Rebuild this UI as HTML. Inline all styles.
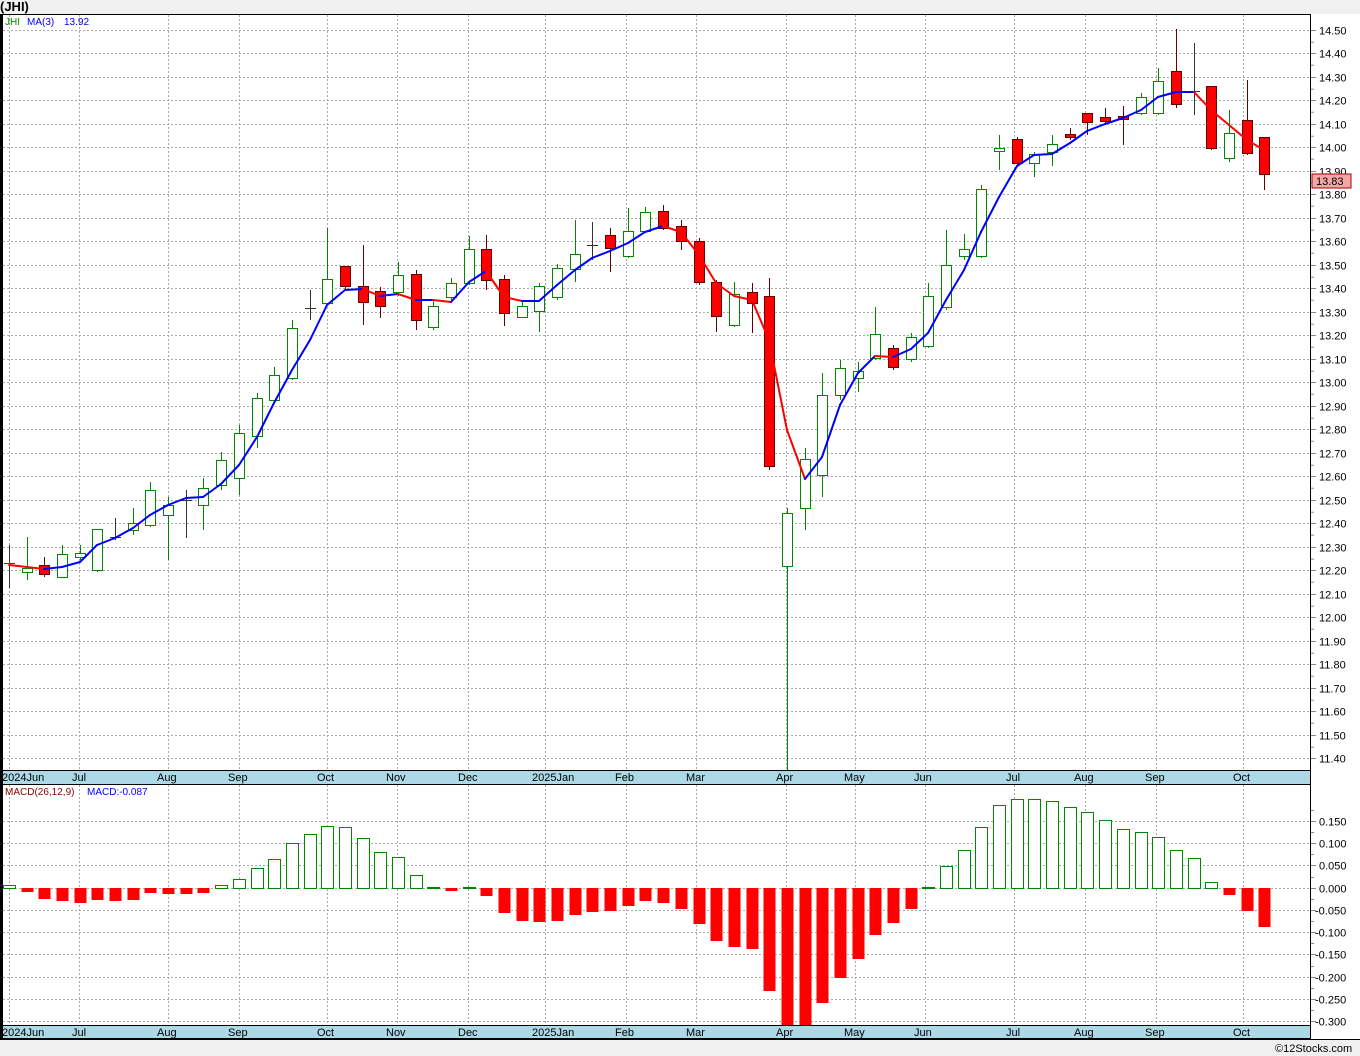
<!DOCTYPE html>
<html><head><meta charset="utf-8"><style>
body{margin:0;width:1360px;height:1056px;background:#f0f0f0;overflow:hidden;font-family:"Liberation Sans",sans-serif}
svg{position:absolute;left:0;top:0}
</style></head><body>
<svg id="s" width="1360" height="1056" xmlns="http://www.w3.org/2000/svg" font-family="Liberation Sans, sans-serif">
<rect x="2" y="14" width="1309" height="770" fill="#fff"/>
<rect x="1311" y="14" width="49" height="1025" fill="#fff"/>
<rect x="2" y="785" width="1309" height="254" fill="#fff"/>
<rect x="2" y="770" width="1309" height="14" fill="#add8e6"/>
<rect x="2" y="1025" width="1309" height="14" fill="#add8e6"/>
<g id="grid" stroke="#aaa" stroke-dasharray="2,2" stroke-width="1"></g>
<g id="bars"></g>
<g id="cand"></g>
<g id="ma" fill="none" stroke-width="2"></g>
<rect x="2.5" y="14.5" width="1308" height="1024" fill="none" stroke="#000"/>
<line x1="2" y1="784.5" x2="1311" y2="784.5" stroke="#000"/>
<line x1="2" y1="770.5" x2="1311" y2="770.5" stroke="#000"/>
<line x1="2" y1="1025.5" x2="1311" y2="1025.5" stroke="#000"/>
<line x1="2" y1="1039.5" x2="1360" y2="1039.5" stroke="#000"/>
<rect x="0" y="14" width="2" height="1026" fill="#000"/>
<g id="ticks" stroke="#888"></g>
<g font-size="11" fill="#000" id="lbl">
<text x="0" y="11" font-size="13" font-weight="bold">(JHI)</text>
<text x="5" y="25" font-size="10" fill="#080">JHI</text>
<text x="27" y="25" font-size="10" fill="#00f">MA(3)</text>
<text x="64" y="25" font-size="10" fill="#00f">13.92</text>
<text x="5" y="795" font-size="10" fill="#800">MACD(26,12,9)</text>
<text x="87" y="795" font-size="10" fill="#00f">MACD:-0.087</text>
<text x="1275" y="1052" font-size="11">©12Stocks.com</text>
</g>
<rect x="1312" y="174" width="39" height="14" fill="#f4a6a6" stroke="#a00"/>
<text x="1316" y="185" font-size="11">13.83</text>
</svg>
<script>
var NS="http://www.w3.org/2000/svg";
function el(p,t,a){var e=document.createElementNS(NS,t);for(var k in a)e.setAttribute(k,a[k]);p.appendChild(e);return e;}
var g=document.getElementById('grid'),tk=document.getElementById('ticks'),lb=document.getElementById('lbl');
var months=[[9,"2024Jun",2],[79,"Jul",72],[168,"Aug",157],[239,"Sep",228],[327,"Oct",317],[397,"Nov",386],[468,"Dec",458],[545,"2025Jan",532],[626,"Feb",615],[696,"Mar",686],[786,"Apr",776],[855,"May",844],[925,"Jun",914],[1014,"Jul",1006],[1085,"Aug",1074],[1156,"Sep",1145],[1243,"Oct",1233]];
months.forEach(function(m){el(g,'line',{x1:m[0]+.5,y1:15,x2:m[0]+.5,y2:770});el(g,'line',{x1:m[0]+.5,y1:785,x2:m[0]+.5,y2:1025});
var t=el(lb,'text',{x:m[2],y:781});t.textContent=m[1];var t2=el(lb,'text',{x:m[2],y:1036});t2.textContent=m[1];});
for(var k=0;k<=31;k++){var y=Math.round(30+k*23.484)+.5;el(g,'line',{x1:3,y1:y,x2:1311,y2:y});el(tk,'line',{x1:1311,y1:y,x2:1316,y2:y});
var t=el(lb,'text',{x:1319,y:y+4});t.textContent=(14.5-k*0.1).toFixed(2);
if(k<31)el(tk,'line',{x1:1311,y1:y+11.7,x2:1314,y2:y+11.7});}
for(var k=0;k<=9;k++){var v=0.15-k*0.05;var y=Math.round(821+k*22.22)+.5;el(g,'line',{x1:3,y1:y,x2:1311,y2:y});el(tk,'line',{x1:1311,y1:y,x2:1316,y2:y});
var s=v.toFixed(3);if(Math.abs(v)<1e-9)s="0.000";var t=el(lb,'text',{x:v<-1e-9?1315:1319,y:y+4});t.textContent=s;
el(tk,'line',{x1:1311,y1:y-11,x2:1314,y2:y-11});}
var C=[[545,588,563,565,'d'],[537,580,568,572,'g'],[557,577,565,574,'r'],[545,578,554,577,'g'],[545,560,553,557,'g'],[529,572,529,570,'g'],[518,540,537,538,'d'],[508,535,523,530,'g'],[482,527,490,525,'g'],[497,560,505,515,'g'],[490,538,500,501,'d'],[478,530,488,505,'g'],[452,490,460,485,'g'],[425,495,433,478,'g'],[393,448,398,436,'g'],[367,402,375,400,'g'],[320,380,328,378,'g'],[290,320,308,309,'d'],[228,305,279,303,'g'],[266,290,266,286,'r'],[245,325,286,302,'r'],[287,318,291,306,'r'],[262,296,275,292,'g'],[270,330,274,320,'r'],[300,330,306,327,'g'],[278,300,283,297,'g'],[236,285,249,283,'g'],[235,290,249,280,'r'],[275,326,279,313,'r'],[300,318,306,317,'g'],[283,332,286,311,'g'],[264,300,268,297,'g'],[220,282,254,269,'g'],[222,260,245,246,'d'],[228,272,235,248,'r'],[208,258,231,256,'g'],[207,233,212,231,'g'],[205,230,211,228,'r'],[220,250,226,241,'r'],[238,285,241,282,'r'],[280,332,282,316,'r'],[282,327,294,325,'g'],[283,333,292,303,'r'],[278,470,296,466,'r'],[508,770,513,566,'g'],[448,530,459,508,'g'],[373,497,395,475,'g'],[360,400,368,395,'g'],[362,392,371,378,'g'],[307,360,334,358,'g'],[345,370,348,367,'r'],[333,362,337,359,'g'],[283,348,296,346,'g'],[230,310,265,307,'g'],[234,260,249,256,'g'],[185,258,189,256,'g'],[135,170,148,151,'g'],[137,165,139,163,'r'],[152,177,154,163,'g'],[135,166,144,152,'g'],[128,140,134,137,'r'],[113,135,113,122,'r'],[108,125,117,121,'r'],[106,145,116,119,'r'],[93,115,97,113,'g'],[68,115,81,113,'g'],[29,108,71,104,'r'],[43,115,91,93,'d'],[86,150,86,148,'r'],[110,162,133,158,'g'],[80,155,120,153,'r'],[137,190,137,174,'r']];
var cg=document.getElementById('cand');
function X(i){return Math.round(9+i*17.68);}
C.forEach(function(c,i){var x=X(i);var col=c[4]=='r'?'#600':(c[4]=='g'?'#080':'#333');
el(cg,'line',{x1:x+.5,y1:c[0],x2:x+.5,y2:c[1],stroke:col});
if(c[4]=='d'){el(cg,'line',{x1:x-5,y1:c[2]+.5,x2:x+6,y2:c[2]+.5,stroke:c[4]=='d'&&i==0?'#c00':'#333'});}
else el(cg,'rect',{x:x-4.5,y:c[2]+.5,width:10,height:Math.max(1,c[3]-c[2]),fill:c[4]=='r'?'#f00':'#fff',stroke:col});});
var M=[565,567,569,567,562,545,538,528,515,505,498,497,484,465,437,403,370,340,305,290,289,296,294,300,300,302,282,271,297,301,301,285,270,258,251,243,232,226,232,255,283,296,300,340,430,479,457,405,373,356,357,349,333,300,270,232,197,166,155,154,143,131,124,118,110,97,92,92,110,125,140,150];
var mg=document.getElementById('ma');
for(var i=0;i<M.length-1;i++)el(mg,'line',{x1:X(i),y1:M[i],x2:X(i+1),y2:M[i+1],stroke:M[i+1]>M[i]?'#f00':'#00f','stroke-linecap':'round'});
var B=[885,892,899,901,903,900,901,900,893,894,894,893,885,879,868,859,843,834,826,827,838,852,857,875,887,891,887,896,913,921,922,921,915,912,911,906,901,903,909,924,941,947,949,991,1025,1025,1003,978,959,935,923,909,887,866,850,827,805,799,799,801,807,812,820,829,832,837,850,858,882,895,911,927];
var bg=document.getElementById('bars');
B.forEach(function(v,i){var x=X(i);if(v<888)el(bg,'rect',{x:x-5.5,y:v+.5,width:12,height:888-v,fill:'#fff',stroke:'#080'});
else el(bg,'rect',{x:x-5.5,y:888,width:12,height:v-888,fill:'#f00'});});
</script>
</body></html>
